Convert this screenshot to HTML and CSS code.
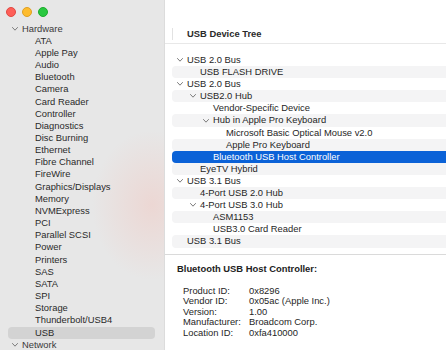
FILE: index.html
```html
<!DOCTYPE html>
<html>
<head>
<meta charset="utf-8">
<link rel="stylesheet" href="styles.css">
</head>
<body>
<div class="window">
  <aside class="sidebar">
    <div class="lights">
      <span class="light red"></span>
      <span class="light yellow"></span>
      <span class="light green"></span>
    </div>
    <ul class="nav">
      <li class="group"><svg class="chev" viewBox="0 0 6 4"><polyline points="0.5,0.5 3,3.2 5.5,0.5"/></svg>Hardware</li>
      <li>ATA</li>
      <li>Apple Pay</li>
      <li>Audio</li>
      <li>Bluetooth</li>
      <li>Camera</li>
      <li>Card Reader</li>
      <li>Controller</li>
      <li>Diagnostics</li>
      <li>Disc Burning</li>
      <li>Ethernet</li>
      <li>Fibre Channel</li>
      <li>FireWire</li>
      <li>Graphics/Displays</li>
      <li>Memory</li>
      <li>NVMExpress</li>
      <li>PCI</li>
      <li>Parallel SCSI</li>
      <li>Power</li>
      <li>Printers</li>
      <li>SAS</li>
      <li>SATA</li>
      <li>SPI</li>
      <li>Storage</li>
      <li>Thunderbolt/USB4</li>
      <li class="current">USB</li>
      <li class="group"><svg class="chev" viewBox="0 0 6 4"><polyline points="0.5,0.5 3,3.2 5.5,0.5"/></svg>Network</li>
    </ul>
  </aside>
  <main class="content">
    <div class="toolbar"></div>
    <div class="colhead"><span class="colsep"></span><span class="coltitle">USB Device Tree</span></div>
    <div class="tree">
      <div class="row l0"><svg class="chev" viewBox="0 0 6 4"><polyline points="0.5,0.5 3,3.2 5.5,0.5"/></svg>USB 2.0 Bus</div>
      <div class="row l1 alt">USB FLASH DRIVE</div>
      <div class="row l0"><svg class="chev" viewBox="0 0 6 4"><polyline points="0.5,0.5 3,3.2 5.5,0.5"/></svg>USB 2.0 Bus</div>
      <div class="row l1 alt"><svg class="chev" viewBox="0 0 6 4"><polyline points="0.5,0.5 3,3.2 5.5,0.5"/></svg>USB2.0 Hub</div>
      <div class="row l2">Vendor-Specific Device</div>
      <div class="row l2 alt"><svg class="chev" viewBox="0 0 6 4"><polyline points="0.5,0.5 3,3.2 5.5,0.5"/></svg>Hub in Apple Pro Keyboard</div>
      <div class="row l3">Microsoft Basic Optical Mouse v2.0</div>
      <div class="row l3 alt">Apple Pro Keyboard</div>
      <div class="row l2 selected">Bluetooth USB Host Controller</div>
      <div class="row l1 alt">EyeTV Hybrid</div>
      <div class="row l0"><svg class="chev" viewBox="0 0 6 4"><polyline points="0.5,0.5 3,3.2 5.5,0.5"/></svg>USB 3.1 Bus</div>
      <div class="row l1 alt">4-Port USB 2.0 Hub</div>
      <div class="row l1"><svg class="chev" viewBox="0 0 6 4"><polyline points="0.5,0.5 3,3.2 5.5,0.5"/></svg>4-Port USB 3.0 Hub</div>
      <div class="row l2 alt">ASM1153</div>
      <div class="row l2">USB3.0 Card Reader</div>
      <div class="row l0 alt">USB 3.1 Bus</div>
    </div>
    <section class="detail">
      <h2 class="detail-title">Bluetooth USB Host Controller:</h2>
      <dl class="props">
        <dt>Product ID:</dt><dd>0x8296</dd>
        <dt>Vendor ID:</dt><dd>0x05ac (Apple Inc.)</dd>
        <dt>Version:</dt><dd>1.00</dd>
        <dt>Manufacturer:</dt><dd>Broadcom Corp.</dd>
        <dt>Location ID:</dt><dd>0xfa410000</dd>
      </dl>
    </section>
  </main>
</div>
</body>
</html>
```

FILE: styles.css
```css
* { box-sizing: border-box; }
html, body {
  margin: 0;
  padding: 0;
  width: 446px;
  height: 350px;
  overflow: hidden;
  background: #ffffff;
}
body {
  font-family: "Liberation Sans", Arial, sans-serif;
  font-size: 9.4px;
  color: #222222;
}
.window {
  display: flex;
  width: 446px;
  height: 350px;
}
.sidebar {
  width: 165px;
  flex: none;
  height: 350px;
  background:
    radial-gradient(ellipse 60px 75px at 152px 205px, rgba(238, 208, 203, 0.7), rgba(238, 208, 203, 0) 100%),
    #e7e7e7;
  border-right: 1px solid #dcdcdc;
  overflow: hidden;
}
.lights {
  display: flex;
  gap: 6px;
  padding: 7px 0 0 6px;
  height: 22.6px;
}
.light {
  width: 10px;
  height: 10px;
  border-radius: 50%;
  display: block;
}
.red { background: #fe5f58; border: 0.5px solid #e14942; }
.yellow { background: #febc2e; border: 0.5px solid #dfa023; }
.green { background: #29c840; border: 0.5px solid #1dac2c; }
.nav {
  list-style: none;
  margin: 0;
  padding: 0;
}
.nav li {
  height: 12.17px;
  line-height: 12.17px;
  padding-left: 27px;
  margin: 0 9px 0 8px;
  white-space: nowrap;
  color: #2a2a2a;
}
.nav li.group {
  padding-left: 4px;
  color: #3a3a3a;
  display: flex;
  align-items: center;
}
.nav li.group .chev { margin-right: 4px; }
.nav li.current {
  background: #d3d3d3;
  border-radius: 4px;
}
.chev {
  width: 6px;
  height: 4px;
  flex: none;
  fill: none;
  stroke: #7a7a7a;
  stroke-width: 1;
  stroke-linecap: round;
  stroke-linejoin: round;
}
.content {
  flex: 1;
  display: flex;
  flex-direction: column;
  min-width: 0;
  height: 350px;
  background: #ffffff;
}
.toolbar { height: 24px; flex: none; }
.colhead {
  height: 20px;
  flex: none;
  display: flex;
  align-items: center;
  padding-left: 7px;
  border-bottom: 1px solid #e8e8e8;
}
.colsep {
  width: 1px;
  height: 12px;
  background: #e2e2e2;
  margin-right: 14px;
}
.coltitle {
  font-weight: bold;
  color: #2a2a2a;
}
.tree {
  height: 211px;
  flex: none;
  padding-top: 10px;
  overflow: hidden;
  border-bottom: 1px solid #dadada;
}
.row {
  height: 12.1px;
  line-height: 12.1px;
  margin-left: 7px;
  border-radius: 4px 0 0 4px;
  white-space: nowrap;
  display: flex;
  align-items: center;
  color: #262626;
}
.row .chev { margin-right: 4px; margin-left: -10px; }
.row.alt { background: #f4f4f5; }
.row.selected { background: #0b62d7; color: #ffffff; }
.l0 { padding-left: 15px; }
.l1 { padding-left: 28px; }
.l2 { padding-left: 41px; }
.l3 { padding-left: 54px; }
.detail {
  flex: 1;
  padding: 8px 0 0 12px;
}
.detail-title {
  margin: 0;
  font-size: 9.4px;
  line-height: 12px;
  font-weight: bold;
  color: #222222;
}
.props {
  margin: 11px 0 0 6px;
  display: grid;
  grid-template-columns: 66px auto;
  grid-auto-rows: 10.4px;
  line-height: 10.4px;
}
.props dt, .props dd {
  margin: 0;
  white-space: nowrap;
  color: #262626;
}
```
